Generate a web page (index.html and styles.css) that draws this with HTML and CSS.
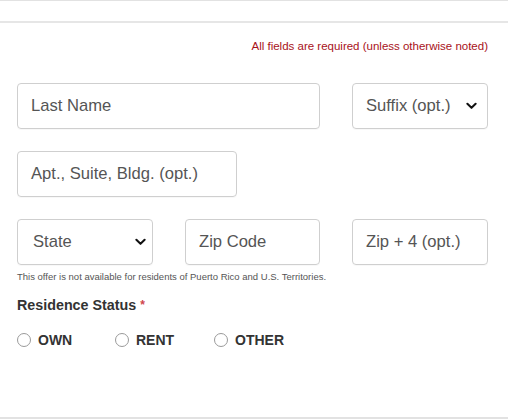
FILE: index.html
```html
<!DOCTYPE html>
<html>
<head>
<meta charset="utf-8">
<link rel="stylesheet" href="styles.css">
</head>
<body>
<div class="page">
  <div class="topbar"></div>
  <form class="form">
    <p class="required-note">All fields are required (unless otherwise noted)</p>
    <div class="row">
      <div class="field span2">Last Name</div>
      <div class="field select">Suffix (opt.)
        <svg class="chev" viewBox="0 0 12 8" width="11" height="8"><path d="M1.5 1.5 L6 6 L10.5 1.5" fill="none" stroke="#111" stroke-width="2.2" stroke-linecap="round" stroke-linejoin="round"/></svg>
      </div>
    </div>
    <div class="row">
      <div class="field wide">Apt., Suite, Bldg. (opt.)</div>
    </div>
    <div class="row">
      <div class="field select state">State
        <svg class="chev" viewBox="0 0 12 8" width="11" height="8"><path d="M1.5 1.5 L6 6 L10.5 1.5" fill="none" stroke="#111" stroke-width="2.2" stroke-linecap="round" stroke-linejoin="round"/></svg>
      </div>
      <div class="field">Zip Code</div>
      <div class="field">Zip + 4 (opt.)</div>
    </div>
    <p class="disclaimer">This offer is not available for residents of Puerto Rico and U.S. Territories.</p>
    <p class="label">Residence Status <span class="star">*</span></p>
    <div class="radios">
      <label class="radio own"><span class="circle"></span>OWN</label>
      <label class="radio rent"><span class="circle"></span>RENT</label>
      <label class="radio"><span class="circle"></span>OTHER</label>
    </div>
  </form>
  <div class="bottombar"></div>
</div>
</body>
</html>
```
FILE: styles.css
```css
html, body {
  margin: 0;
  padding: 0;
  background: #fff;
}
.page {
  width: 508px;
  height: 420px;
  display: flex;
  flex-direction: column;
  font-family: "Liberation Sans", Arial, sans-serif;
  color: #333;
}
.topbar {
  height: 20px;
  border-top: 1px solid #e2e2e2;
  border-bottom: 2px solid #e6e6e6;
}
.form {
  flex: 1;
  padding: 0 20px 0 17px;
  margin: 0;
}
.required-note {
  margin: 16px 0 0 0;
  text-align: right;
  font-size: 11.5px;
  line-height: 14px;
  color: #a8121a;
}
.row {
  display: grid;
  grid-template-columns: 136px 135px 136px;
  column-gap: 32px;
  margin-top: 22px;
}
.required-note + .row { margin-top: 30px; }
.field {
  box-sizing: border-box;
  height: 46px;
  border: 1px solid #cfcfcf;
  border-radius: 4px;
  padding: 0 13px;
  display: flex;
  align-items: center;
  font-size: 16.6px;
  color: #555;
  white-space: nowrap;
  box-shadow: 0 1px 1px rgba(0,0,0,0.03);
}
.span2 {
  grid-column: 1 / span 2;
}
.select {
  grid-column: 3;
  justify-content: space-between;
  padding-right: 10px;
}
.select.state {
  grid-column: 1;
  padding-left: 15px;
  padding-right: 6px;
}
.wide {
  grid-column: 1 / span 2;
  width: 220px;
}
.chev {
  display: block;
}
.disclaimer {
  margin: 6px 0 0 0;
  font-size: 9.5px;
  line-height: 12px;
  color: #555;
}
.label {
  margin: 14px 0 0 0;
  font-size: 14.3px;
  font-weight: bold;
  line-height: 16px;
  color: #333;
}
.star {
  color: #d0454c;
  font-size: 12px;
  vertical-align: top;
}
.radios {
  display: flex;
  margin-top: 19px;
  align-items: center;
}
.radio {
  display: flex;
  align-items: center;
  font-size: 14px;
  font-weight: bold;
  color: #333;
  line-height: 16px;
}
.radio.own { width: 98px; }
.radio.rent { width: 99px; }
.circle {
  box-sizing: border-box;
  width: 14px;
  height: 14px;
  border: 1px solid #9a9a9a;
  border-radius: 50%;
  margin-right: 7px;
  background: #fff;
}
.bottombar {
  height: 0;
  border-bottom: 2px solid #e2e2e2;
  margin-bottom: 1px;
}
```
